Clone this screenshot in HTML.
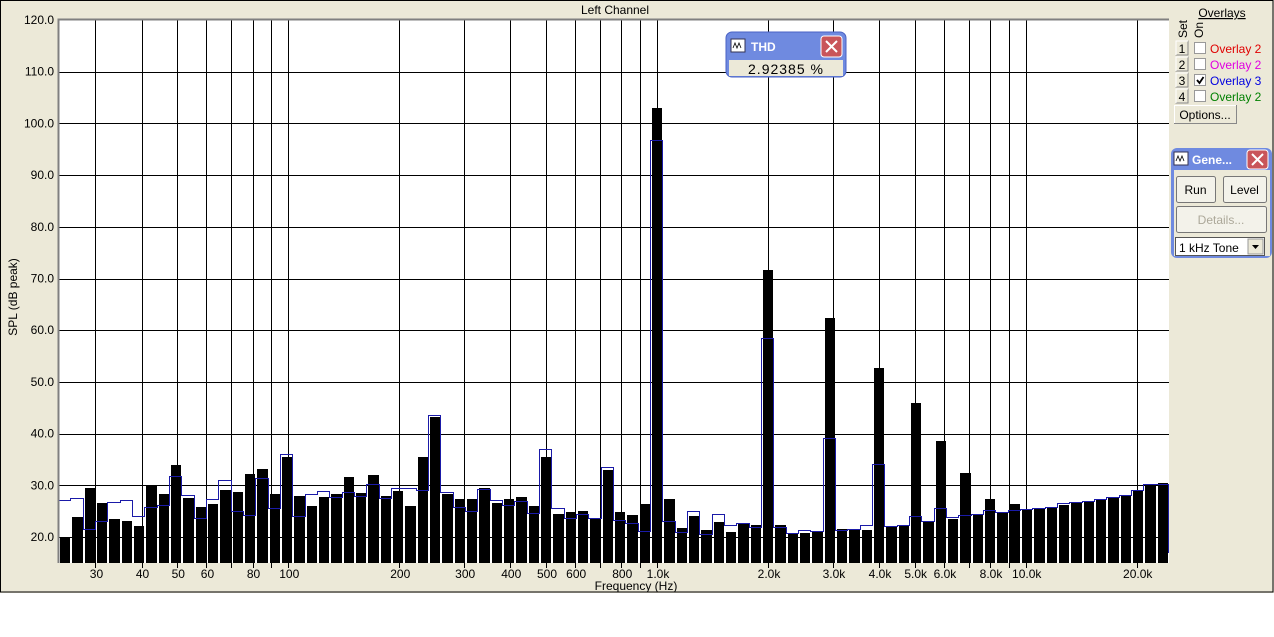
<!DOCTYPE html>
<html><head><meta charset="utf-8"><style>
html,body{margin:0;padding:0;width:1274px;height:637px;background:#fff;overflow:hidden}
body{font-family:"Liberation Sans",sans-serif}
</style></head><body>
<svg id="s" width="1274" height="637" xmlns="http://www.w3.org/2000/svg" style="position:absolute;left:0;top:0;font-family:'Liberation Sans',sans-serif"></svg>
<script>
var NS="http://www.w3.org/2000/svg",s=document.getElementById('s');
function el(t,a,txt){var e=document.createElementNS(NS,t);for(var k in a)e.setAttribute(k,a[k]);if(txt!=null)e.textContent=txt;s.appendChild(e);return e;}
// frame
el('rect',{x:0,y:0,width:1274,height:593,fill:'#ece9d8'});
el('rect',{x:0.5,y:0.5,width:1272.5,height:591.5,fill:'none',stroke:'#000'});
// plot
var L=59,R=1169,T=20,B=563;
el('rect',{x:L,y:T,width:R-L,height:B-T,fill:'#fff'});
function fx(f){return 657+111*Math.log2(f/1000);}
function dy(d){return 537-(d-20)*5.17;}
var fr=[30,40,50,60,70,80,90,100,200,300,400,500,600,700,800,900,1000,2000,3000,4000,5000,6000,7000,8000,9000,10000,20000];
var g='';
fr.forEach(function(f){var x=Math.round(fx(f))+0.5;g+='M'+x+' '+T+'V'+(B+5);});
for(var d=30;d<=110;d+=10){var y=Math.round(dy(d))+0.5;g+='M'+L+' '+y+'H'+R;}
g+='M'+L+' '+(Math.round(dy(20))+0.5)+'H'+R;
el('path',{d:g,stroke:'#000','stroke-width':1,fill:'none'});
// bars
var tops=[537,517,488,503,519,521,526,486,494,465,498,507,504,490,492,474,469,494,457,496,506,497,494,477,493,475,496,491,506,457,417,494,499,499,488,503,499,497,506,457,514,512,511,519,470,512,515,504,108,499,528,516,530,522,532,524,525,270,525,533,533,532,318,529,529,530,368,526,526,403,522,441,519,473,514,499,512,504,509,508,507,505,503,502,500,497,495,491,485,483];
var blue=[500,498,529,521,502,500,516,507,505,476,495,518,499,480,511,515,478,508,454,516,494,491,497,492,496,484,498,488,488,490,415,492,507,511,489,500,505,501,513,449,508,518,514,518,467,520,523,531,140,521,532,511,534,514,525,523,527,338,527,533,530,531,438,530,529,525,464,526,525,516,521,508,517,515,514,510,512,510,509,508,507,503,502,501,499,497,495,490,484,484];
var p=(R-L)/90,bp='';
for(var i=0;i<90;i++){var x0=Math.round(L+i*p+1),x1=Math.round(L+(i+1)*p-1);bp+='M'+x0+' '+tops[i]+'H'+x1+'V'+B+'H'+x0+'Z';}
el('path',{d:bp,fill:'#000'});
var lp='M'+L+' '+(blue[0]+0.5);
for(var i=0;i<90;i++){var xe=Math.round(L+(i+1)*p)-0.5;lp+='H'+xe;if(i<89)lp+='V'+(blue[i+1]+0.5);}
lp+='V'+(B-10);
el('path',{d:lp,fill:'none',stroke:'#1a1aa8','stroke-width':1});
// border gray
el('path',{d:'M'+(L-0.5)+' '+B+'V'+(T-0.5)+'H'+R,stroke:'#808080','stroke-width':2,fill:'none'});
// y labels
for(var d=20;d<=120;d+=10){el('text',{x:54,y:(d==120?20:dy(d))+4,'font-size':12,'text-anchor':'end',fill:'#000'},d.toFixed(1));}
var lab=[[30,'30'],[40,'40'],[50,'50'],[60,'60'],[80,'80'],[100,'100'],[200,'200'],[300,'300'],[400,'400'],[500,'500'],[600,'600'],[800,'800'],[1000,'1.0k'],[2000,'2.0k'],[3000,'3.0k'],[4000,'4.0k'],[5000,'5.0k'],[6000,'6.0k'],[8000,'8.0k'],[10000,'10.0k'],[20000,'20.0k']];
lab.forEach(function(a){el('text',{x:fx(a[0])+1,y:578,'font-size':12,'text-anchor':'middle'},a[1]);});
el('text',{x:615,y:14,'font-size':12,'text-anchor':'middle'},'Left Channel');
el('text',{x:636,y:590,'font-size':12,'text-anchor':'middle'},'Frequency (Hz)');
el('text',{x:17,y:297,'font-size':12,'text-anchor':'middle',transform:'rotate(-90 17 297)'},'SPL (dB peak)');
// THD window
el('rect',{x:726,y:32,width:120,height:45,rx:6,fill:'#6f8ae0',stroke:'#4a62c4'});
el('rect',{x:731,y:39,width:14,height:13,fill:'#fff',stroke:'#335'});
el('path',{d:'M733 48l2-5 2 5 2-5 2 5',stroke:'#000',fill:'none','stroke-width':0.8});
el('text',{x:751,y:51,'font-size':12,'font-weight':'bold',fill:'#fff'},'THD');
el('rect',{x:821,y:36,width:21,height:21,rx:3,fill:'#c9555a',stroke:'#fff'});
el('path',{d:'M826 41l11 11M837 41l-11 11',stroke:'#fff','stroke-width':2});
el('rect',{x:729,y:60,width:114,height:16,fill:'#ece9d8'});
el('text',{x:786,y:74,'font-size':14,'text-anchor':'middle','letter-spacing':'1'},'2.92385 %');
// overlays panel
el('text',{x:1222,y:17,'font-size':12,'text-anchor':'middle','text-decoration':'underline'},'Overlays');
el('text',{x:1187,y:38,'font-size':12,transform:'rotate(-90 1187 38)','text-anchor':'start'},'Set');
el('text',{x:1203,y:38,'font-size':12,transform:'rotate(-90 1203 38)','text-anchor':'start'},'On');
var oc=[['Overlay 2','#e00000'],['Overlay 2','#e000e0'],['Overlay 3','#0000e0'],['Overlay 2','#008000']];
for(var i=0;i<4;i++){var y=41+i*16;
el('rect',{x:1176,y:y,width:12,height:14,fill:'#ece9d8',stroke:'#888'});
el('path',{d:'M1176 '+(y+14)+'V'+y+'H1188',stroke:'#fff',fill:'none'});
el('text',{x:1182,y:y+12,'font-size':12,'text-anchor':'middle'},String(i+1));
el('rect',{x:1194.5,y:y+1.5,width:11,height:11,fill:'#fff',stroke:'#999'});
if(i==2)el('path',{d:'M1197 '+(y+7)+'l2.5 3 4-6',stroke:'#000','stroke-width':1.8,fill:'none'});
el('text',{x:1210,y:y+12,'font-size':12,fill:oc[i][1]},oc[i][0]);}
el('rect',{x:1174.5,y:105.5,width:62,height:18,fill:'#ece9d8',stroke:'#888'});
el('path',{d:'M1174.5 123V105.5H1236',stroke:'#fff',fill:'none'});
el('text',{x:1205,y:119,'font-size':12,'text-anchor':'middle'},'Options...');
// generator window
el('rect',{x:1171,y:148,width:101,height:110,rx:6,fill:'#6f8ae0'});
el('rect',{x:1174,y:170,width:96,height:86,fill:'#ece9d8'});
el('rect',{x:1174,y:152,width:14,height:13,fill:'#fff',stroke:'#335'});
el('path',{d:'M1176 161l2-5 2 5 2-5 2 5',stroke:'#000',fill:'none','stroke-width':0.8});
el('text',{x:1192,y:164,'font-size':12,'font-weight':'bold',fill:'#fff'},'Gene...');
el('rect',{x:1247,y:150,width:21,height:19,rx:3,fill:'#c9555a',stroke:'#fff'});
el('path',{d:'M1252 154l11 11M1263 154l-11 11',stroke:'#fff','stroke-width':2});
function btn(x,y,w,h,t,c){el('rect',{x:x+.5,y:y+.5,width:w,height:h,rx:2,fill:'#f3f2ea',stroke:'#777'});el('text',{x:x+w/2,y:y+h/2+5,'font-size':12,'text-anchor':'middle',fill:c||'#000'},t);}
btn(1176,176,39,26,'Run');btn(1223,176,43,26,'Level');btn(1176,206,90,26,'Details...','#aca899');
el('rect',{x:1175.5,y:237.5,width:89,height:18,fill:'#fff',stroke:'#555'});
el('text',{x:1179,y:252,'font-size':12},'1 kHz Tone');
el('rect',{x:1248,y:239,width:15,height:15,fill:'#ece9d8',stroke:'#999'});
el('path',{d:'M1252 245h7l-3.5 4z',fill:'#000'});
</script>
</body></html>
